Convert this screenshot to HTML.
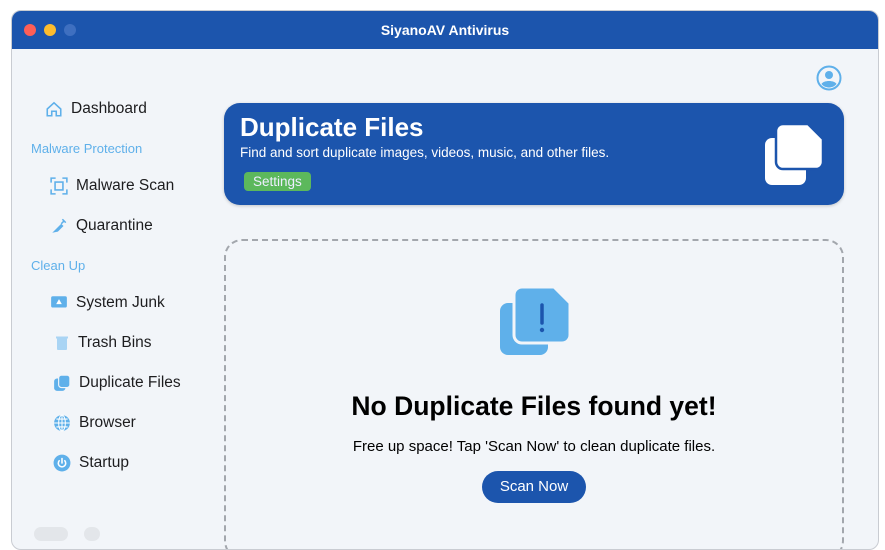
<!DOCTYPE html>
<html><head><meta charset="utf-8"><style>
*{margin:0;padding:0;box-sizing:border-box}
body{width:885px;height:531px;background:#fff;font-family:"Liberation Sans",sans-serif;position:relative;overflow:hidden}
.win{position:absolute;left:11px;top:10px;width:868px;height:540px;background:#f2f5f9;border-radius:10px;overflow:hidden;border:1px solid #c9ccd2}
.tb{height:38px;background:#1c55ad;color:#fff;font-weight:bold;font-size:14px;text-align:center;line-height:38px;position:relative}
.dot{position:absolute;top:13px;width:12px;height:12px;border-radius:50%}
.it{position:absolute;font-size:15.5px;color:#1d1d1f;display:flex;align-items:center}
.it svg{margin-right:8px;width:18px;height:18px}
.sec{position:absolute;font-size:13px;color:#5fb0ea}
.banner{position:absolute;left:212px;top:92px;width:620px;height:102px;background:#1c55ad;border-radius:16px;color:#fff;box-shadow:0 1px 3px rgba(0,0,0,.2)}
.dash{position:absolute;left:212px;top:228px;width:620px;height:320px;border:2px dashed #a3a7ad;border-radius:18px}
</style></head><body>
<div class="win">
<div class="tb">SiyanoAV Antivirus
<div class="dot" style="left:12px;background:#fe5f57"></div>
<div class="dot" style="left:32px;background:#febc2e"></div>
<div class="dot" style="left:52px;background:#3e6fc0"></div>
</div>
<svg style="position:absolute;left:804px;top:54px" width="26" height="26" viewBox="0 0 26 26"><circle cx="13" cy="13" r="11.5" fill="none" stroke="#5fb0ea" stroke-width="2"/><circle cx="13" cy="10" r="4" fill="#5fb0ea"/><path d="M5.5 19c2-4 13-4 15 0c-2 2.5-5 3.5-7.5 3.5s-5.5-1-7.5-3.5z" fill="#5fb0ea"/></svg>

<div class="it" style="left:33px;top:89px"><svg viewBox="0 0 16 16"><path d="M2 8L8 2.5 14 8V14H10V10H6V14H2Z" fill="none" stroke="#5fb0ea" stroke-width="1.4"/></svg>Dashboard</div>
<div class="sec" style="left:19px;top:130px">Malware Protection</div>
<div class="it" style="left:38px;top:166px"><svg viewBox="0 0 16 16"><path d="M1 5V1H5M11 1H15V5M15 11V15H11M5 15H1V11" fill="none" stroke="#5fb0ea" stroke-width="1.4"/><rect x="4.5" y="4.5" width="7" height="7" fill="none" stroke="#5fb0ea" stroke-width="1.4"/></svg>Malware Scan</div>
<div class="it" style="left:38px;top:206px"><svg viewBox="0 0 16 16"><path d="M2 14L5 11L10 6L12 8L7 13Z" fill="#5fb0ea"/><path d="M11 2L14 5M12.5 3.5L10 6" stroke="#5fb0ea" stroke-width="1.4"/></svg>Quarantine</div>
<div class="sec" style="left:19px;top:247px">Clean Up</div>
<div class="it" style="left:38px;top:283px"><svg viewBox="0 0 16 16"><rect x="1" y="2" width="14" height="10" rx="1.5" fill="#5fb0ea"/><path d="M8 4.5L10.5 9H5.5Z" fill="#fff"/></svg>System Junk</div>
<div class="it" style="left:42px;top:323px"><svg viewBox="0 0 16 16" style="width:16px"><rect x="3" y="3" width="10" height="12" rx="1" fill="#a9d4f4"/><rect x="2" y="1.5" width="12" height="2" fill="#a9d4f4"/></svg>Trash Bins</div>
<div class="it" style="left:41px;top:363px"><svg viewBox="0 0 16 16"><rect x="1" y="4" width="10" height="11" rx="2.5" fill="#5fb0ea"/><rect x="5" y="1" width="10" height="11" rx="2.5" fill="#5fb0ea" stroke="#f2f5f9" stroke-width="1"/></svg>Duplicate Files</div>
<div class="it" style="left:41px;top:403px"><svg viewBox="0 0 16 16"><circle cx="8" cy="8" r="7" fill="#5fb0ea"/><path d="M1 8H15M8 1V15M3 4.5H13M3 11.5H13" stroke="#fff" stroke-width=".9"/><ellipse cx="8" cy="8" rx="3" ry="7" fill="none" stroke="#fff" stroke-width=".9"/></svg>Browser</div>
<div class="it" style="left:41px;top:443px"><svg viewBox="0 0 16 16"><circle cx="8" cy="8" r="7.5" fill="#5fb0ea"/><path d="M5.5 6a3.3 3.3 0 1 0 5 0M8 4V8" fill="none" stroke="#fff" stroke-width="1.4" stroke-linecap="round"/></svg>Startup</div>
<div style="position:absolute;left:22px;top:516px;width:34px;height:14px;border-radius:7px;background:#e3e6ea"></div>
<div style="position:absolute;left:72px;top:516px;width:16px;height:14px;border-radius:7px;background:#e3e6ea"></div>

<div class="banner">
<div style="position:absolute;left:16px;top:9px;font-size:26px;font-weight:bold">Duplicate Files</div>
<div style="position:absolute;left:16px;top:42px;font-size:13.5px">Find and sort duplicate images, videos, music, and other files.</div>
<div style="position:absolute;left:20px;top:69px;background:#5cb85c;border-radius:4px;font-size:13.5px;padding:2px 9px;color:#eef">Settings</div>
<svg style="position:absolute;left:540px;top:20px" width="64" height="64" viewBox="0 0 64 64"><rect x="1" y="15" width="41" height="47" rx="7" fill="#fff"/><path d="M19 1H44L59 16V39a7 7 0 0 1-7 7H19a7 7 0 0 1-7-7V8a7 7 0 0 1 7-7z" fill="#fff" stroke="#1c55ad" stroke-width="2.5"/></svg>
</div>

<div class="dash">
<svg style="position:absolute;left:272px;top:44px" width="74" height="74" viewBox="0 0 74 74"><rect x="2" y="18" width="48" height="52" rx="8" fill="#5fb0ea"/><path d="M24 2H56L72 18V50a8 8 0 0 1-8 8H24a8 8 0 0 1-8-8V10a8 8 0 0 1 8-8z" fill="#5fb0ea" stroke="#f2f5f9" stroke-width="3"/><path d="M44 20V38" stroke="#1c55ad" stroke-width="3.5" stroke-linecap="round"/><circle cx="44" cy="45" r="2.2" fill="#1c55ad"/></svg>
<div style="position:absolute;left:0;width:616px;top:150px;text-align:center;font-size:26.5px;font-weight:bold;color:#000">No Duplicate Files found yet!</div>
<div style="position:absolute;left:0;width:616px;top:197px;text-align:center;font-size:15px;color:#000">Free up space! Tap 'Scan Now' to clean duplicate files.</div>
<div style="position:absolute;left:256px;top:230px;width:104px;height:32px;background:#1c55ad;border-radius:16px;color:#fff;font-size:15px;text-align:center;line-height:32px">Scan Now</div>
</div>
</div>
</body></html>
